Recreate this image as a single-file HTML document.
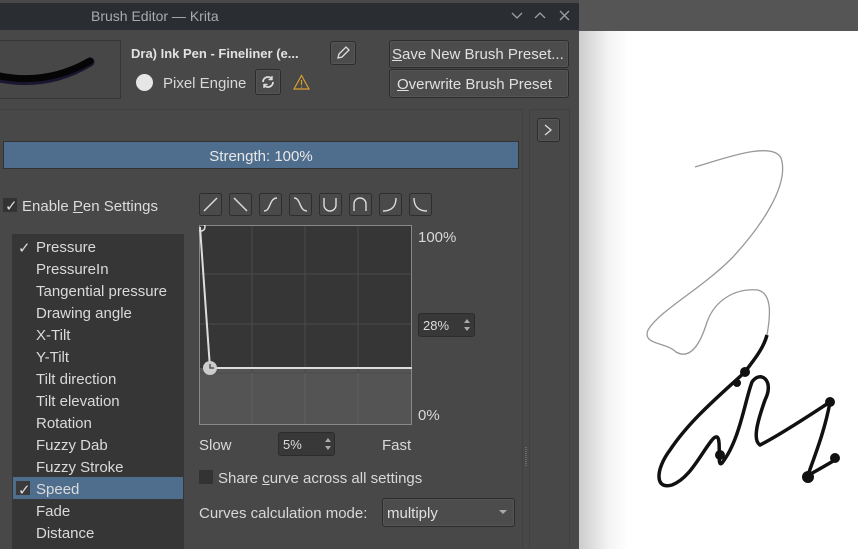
<!DOCTYPE html>
<html><head><style>
*{margin:0;padding:0;box-sizing:border-box}
html,body{width:858px;height:549px;overflow:hidden}
body{background:#fff;font-family:"Liberation Sans","DejaVu Sans",sans-serif;font-size:15px;color:#dcdcdc;position:relative}
.a{position:absolute}
.btn{position:absolute;border:1px solid #2c2c2c;background:#4c4c4c;border-radius:3px;box-shadow:inset 0 0 0 1px #555}
.t{position:absolute;white-space:nowrap}
.li{position:absolute;left:36px;white-space:nowrap;font-size:15px;color:#dadada}
.cb{position:absolute;width:14px;height:14px;background:#333}
</style></head><body>
<div class="a" style="left:579px;top:0;width:279px;height:31px;background:#555"></div>
<div class="a" style="left:579px;top:31px;width:50px;height:518px;background:linear-gradient(90deg,#ccc,#f4f4f4 60%,#fff)"></div>
<svg class="a" style="left:0;top:0" width="858" height="549">
<path d="M695,167 C720,160 772,140 781,158 C790,185 760,228 732,258 C700,290 660,310 648,330 C642,345 666,342 676,352 C690,360 700,345 707,322 C715,300 735,288 758,290 C773,294 770,318 767,335" fill="none" stroke="#999" stroke-width="1.3"/>
<path d="M767,335 C763,350 752,362 745,372 C720,395 690,420 670,450 C655,470 655,490 672,485 C690,478 700,455 712,440 C725,425 715,470 722,463 C740,440 745,400 752,382 C760,370 775,380 765,400 C758,420 752,440 760,445 C780,435 810,415 830,402 C825,430 815,455 808,475 C800,480 818,470 835,460" fill="none" stroke="#111" stroke-width="3.5"/>
<circle cx="745" cy="372" r="5" fill="#111"/><circle cx="737" cy="383" r="4" fill="#111"/><circle cx="830" cy="402" r="5" fill="#111"/><circle cx="808" cy="477" r="6" fill="#111"/><circle cx="835" cy="458" r="5" fill="#111"/><circle cx="720" cy="455" r="5" fill="#111"/>
</svg>
<div class="a" style="left:0;top:0;width:579px;height:549px;background:#484848"></div>
<div class="a" style="left:0;top:3px;width:579px;height:27px;background:#2a2e32"></div>
<div class="t" style="left:91px;top:8px;font-size:14px;color:#a8acb0">Brush Editor — Krita</div>
<svg class="a" style="left:508px;top:9px" width="66" height="14" fill="none" stroke="#9ca0a4" stroke-width="1.3"><path d="M4,4 L9,9 L14,4"/><path d="M27,9 L32,4 L37,9"/><path d="M52,2 L61,11 M61,2 L52,11"/></svg>
<div class="a" style="left:-2px;top:40px;width:123px;height:59px;border:1px solid #363636;background:#474747"></div>
<svg class="a" style="left:0;top:40px" width="121" height="58"><path d="M0,38 C30,44 60,40 90,22" fill="none" stroke="#1a1630" stroke-width="9" stroke-linecap="round"/><path d="M0,36 C30,42 60,38 90,21" fill="none" stroke="#050505" stroke-width="7" stroke-linecap="round"/></svg>
<div class="t" style="left:131px;top:46px;font-weight:bold;font-size:13px;color:#e2e2e2">Dra) Ink Pen - Fineliner (e...</div>
<div class="btn" style="left:330px;top:41px;width:26px;height:24px"></div>
<svg class="a" style="left:334px;top:44px" width="18" height="18" fill="none" stroke="#ddd" stroke-width="1.3"><path d="M4,14 L5,10 L12,3 L15,6 L8,13 Z"/></svg>
<div class="a" style="left:136px;top:74px;width:17px;height:17px;border-radius:50%;background:#e6e6e6"></div>
<div class="t" style="left:163px;top:75px;color:#d8d8d8">Pixel Engine</div>
<div class="btn" style="left:255px;top:69px;width:26px;height:26px"></div>
<svg class="a" style="left:259px;top:73px" width="18" height="18" fill="none" stroke="#ddd" stroke-width="1.8"><path d="M4,9 A5,5 0 0 1 13,6 M14,9 A5,5 0 0 1 5,12"/><path d="M13,3 L13,6.5 L9.5,6.5 M5,15 L5,11.5 L8.5,11.5" stroke-width="1.4"/></svg>
<svg class="a" style="left:293px;top:74px" width="17" height="16" fill="none" stroke="#d9a030" stroke-width="1.2"><path d="M8.5,1.5 L16,15 L1,15 Z"/><path d="M8.5,6 L8.5,11 M8.5,12.5 L8.5,13.5"/></svg>
<div class="btn" style="left:389px;top:40px;width:180px;height:28px"></div>
<div class="t" style="left:392px;top:46px;color:#e0e0e0"><u>S</u>ave New Brush Preset...</div>
<div class="btn" style="left:389px;top:69px;width:180px;height:29px"></div>
<div class="t" style="left:397px;top:76px;color:#e0e0e0"><u>O</u>verwrite Brush Preset</div>
<div class="a" style="left:-2px;top:109px;width:525px;height:440px;border:1px solid #404040;border-bottom:none"></div>
<div class="a" style="left:529px;top:109px;width:41px;height:440px;border:1px solid #404040;border-bottom:none"></div>
<div class="btn" style="left:537px;top:118px;width:23px;height:24px"></div>
<svg class="a" style="left:541px;top:122px" width="14" height="16" fill="none" stroke="#ddd" stroke-width="1.3"><path d="M4,3 L10,8 L4,13"/></svg>
<div class="a" style="left:3px;top:141px;width:516px;height:28px;background:#4f6e8d;border:1px solid #333"></div>
<div class="t" style="left:3px;top:148px;width:516px;text-align:center;color:#e8e8e8">Strength: 100%</div>
<svg class="a" style="left:524px;top:447px" width="4" height="20"><path d="M2,0 V20" stroke="#888" stroke-dasharray="1,1"/></svg>
<div class="cb" style="left:3px;top:198px"></div>
<div class="t" style="left:5px;top:197px;color:#ddd">✓</div>
<div class="t" style="left:22px;top:198px;color:#dcdcdc">Enable <u>P</u>en Settings</div>
<div class="a" style="left:12px;top:234px;width:172px;height:315px;background:#363636"></div>
<div class="a" style="left:13px;top:477px;width:170px;height:22px;background:#4f6e8d"></div>
<div class="cb" style="left:16px;top:481px;background:#3a3a3a"></div>
<div class="t" style="left:18px;top:239px;color:#ddd">✓</div>
<div class="t" style="left:18px;top:481px;color:#ddd">✓</div>
<div class="li" style="top:239px">Pressure</div>
<div class="li" style="top:261px">PressureIn</div>
<div class="li" style="top:283px">Tangential pressure</div>
<div class="li" style="top:305px">Drawing angle</div>
<div class="li" style="top:327px">X-Tilt</div>
<div class="li" style="top:349px">Y-Tilt</div>
<div class="li" style="top:371px">Tilt direction</div>
<div class="li" style="top:393px">Tilt elevation</div>
<div class="li" style="top:415px">Rotation</div>
<div class="li" style="top:437px">Fuzzy Dab</div>
<div class="li" style="top:459px">Fuzzy Stroke</div>
<div class="li" style="top:481px">Speed</div>
<div class="li" style="top:503px">Fade</div>
<div class="li" style="top:525px">Distance</div>
<svg class="a" style="left:199px;top:193px" width="236" height="24" fill="none" stroke="#ddd" stroke-width="1.4">
<g stroke="#2e2e2e" fill="#4a4a4a" stroke-width="1"><rect x="0.5" y="0.5" width="22" height="22" rx="2"/><rect x="30.5" y="0.5" width="22" height="22" rx="2"/><rect x="60.5" y="0.5" width="22" height="22" rx="2"/><rect x="90.5" y="0.5" width="22" height="22" rx="2"/><rect x="120.5" y="0.5" width="22" height="22" rx="2"/><rect x="150.5" y="0.5" width="22" height="22" rx="2"/><rect x="180.5" y="0.5" width="22" height="22" rx="2"/><rect x="210.5" y="0.5" width="22" height="22" rx="2"/></g>
<path d="M5,18 L18,5"/><path d="M35,5 L48,18"/><path d="M65,18 C72,18 70,5 78,5"/><path d="M95,5 C102,5 100,18 108,18"/><path d="M125,5 V12 A6,6 0 0 0 137,12 V5"/><path d="M155,18 V11 A6,6 0 0 1 167,11 V18"/><path d="M184,18 C192,18 197,14 197,5"/><path d="M215,5 C215,14 220,18 228,18"/>
</svg>
<div class="a" style="left:199px;top:225px;width:213px;height:143px;background:#363636"></div>
<div class="a" style="left:199px;top:368px;width:213px;height:57px;background:#545454"></div>
<svg class="a" style="left:199px;top:225px" width="213" height="200" fill="none">
<path d="M53,0 V200 M106,0 V200 M159,0 V200 M0,49 H213 M0,99 H213 M0,148 H213" stroke="#4a4a4a" stroke-width="1"/>
<path d="M53,148 V200 M106,148 V200 M159,148 V200" stroke="#606060"/>
<rect x="0.5" y="0.5" width="212" height="199" stroke="#888"/>
<path d="M1,2 L11,143 M11,143 H213" stroke="#ddd" stroke-width="2"/>
<circle cx="11" cy="143" r="7" fill="#ccc"/><path d="M11,139 V143 H15" stroke="#555" stroke-width="1.5"/>
<circle cx="2" cy="2" r="4" stroke="#ddd" stroke-width="1.5"/>
</svg>
<div class="t" style="left:418px;top:229px;color:#d8d8d8">100%</div>
<div class="t" style="left:418px;top:407px;color:#d8d8d8">0%</div>
<div class="a" style="left:418px;top:313px;width:57px;height:24px;background:#383838;border:1px solid #2c2c2c;border-radius:3px"></div>
<div class="t" style="left:423px;top:318px;font-size:13px;color:#ddd">28%</div>
<svg class="a" style="left:461px;top:315px" width="12" height="20" fill="#aaa"><path d="M3,8 L6,4 L9,8 Z M3,12 L6,16 L9,12 Z"/></svg>
<div class="t" style="left:199px;top:437px;color:#d8d8d8">Slow</div>
<div class="t" style="left:382px;top:437px;color:#d8d8d8">Fast</div>
<div class="a" style="left:278px;top:432px;width:57px;height:24px;background:#383838;border:1px solid #2c2c2c;border-radius:3px"></div>
<div class="t" style="left:283px;top:437px;font-size:13px;color:#ddd">5%</div>
<svg class="a" style="left:322px;top:434px" width="12" height="20" fill="#aaa"><path d="M3,8 L6,4 L9,8 Z M3,12 L6,16 L9,12 Z"/></svg>
<div class="cb" style="left:199px;top:470px"></div>
<div class="t" style="left:218px;top:470px;color:#d8d8d8">Share <u>c</u>urve across all settings</div>
<div class="t" style="left:199px;top:505px;color:#d8d8d8">Curves calculation mode:</div>
<div class="btn" style="left:382px;top:498px;width:133px;height:29px"></div>
<div class="t" style="left:387px;top:505px;color:#e0e0e0">multiply</div>
<svg class="a" style="left:498px;top:508px" width="10" height="8" fill="#aaa"><path d="M1,2 L9,2 L5,6 Z"/></svg>
</body></html>
